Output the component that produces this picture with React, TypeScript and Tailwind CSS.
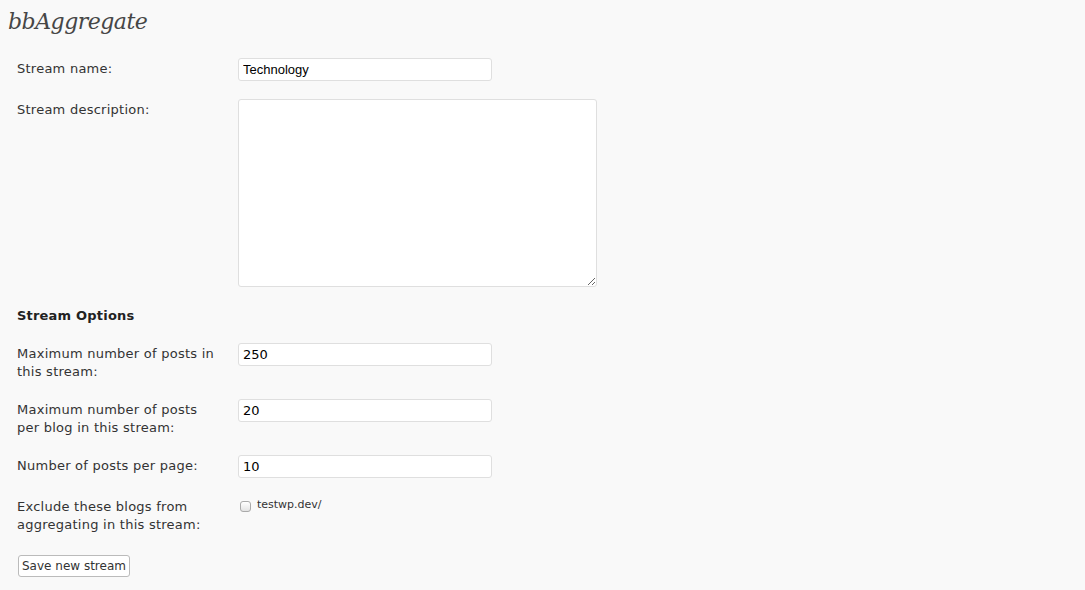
export default function App() {
  const label = "w-[221px] shrink-0 pt-[2px] text-[13px] leading-[18px] tracking-[0.25px] text-[#333]";
  const input =
    "h-[23px] w-[254px] rounded-[3px] border border-[#dfdfdf] bg-white px-[4px] text-[13px] text-[#000] outline-none";
  return (
    <div
      className="min-h-[590px] w-full bg-[#f9f9f9] pl-[17px] pb-[10px]"
      style={{ fontFamily: '"DejaVu Sans", sans-serif' }}
    >
      <h2
        className="-ml-[9px] pt-[7px] text-[22px] italic leading-[30px] tracking-[-0.5px] text-[#464646]"
        style={{ fontFamily: '"DejaVu Serif", serif' }}
      >
        bbAggregate
      </h2>

      <div className="mt-[21px] flex">
        <div className={label}>Stream name:</div>
        <input
          className={input}
          defaultValue="Technology"
          style={{ fontFamily: '"Liberation Sans", Arial, sans-serif' }}
        />
      </div>

      <div className="mt-[18px] flex">
        <div className={label}>Stream description:</div>
        <textarea className="h-[188px] w-[359px] resize rounded-[3px] border border-[#dfdfdf] bg-white p-[4px] text-[13px] outline-none" />
      </div>

      <div className="mt-[20px] text-[13px] font-bold leading-[18px] tracking-[0.2px] text-[#222]">
        Stream Options
      </div>

      <div className="mt-[18px] flex">
        <div className={label}>
          Maximum number of posts in
          <br />
          this stream:
        </div>
        <input className={input} defaultValue="250" />
      </div>

      <div className="mt-[18px] flex">
        <div className={label}>
          Maximum number of posts
          <br />
          per blog in this stream:
        </div>
        <input className={input} defaultValue="20" />
      </div>

      <div className="mt-[18px] flex">
        <div className={label}>Number of posts per page:</div>
        <input className={input} defaultValue="10" />
      </div>

      <div className="mt-[20px] flex">
        <div className="w-[221px] shrink-0 text-[13px] leading-[18px] tracking-[0.25px] text-[#333]">
          Exclude these blogs from
          <br />
          aggregating in this stream:
        </div>
        <label className="flex items-start gap-[6px] pt-[3px] text-[11px] leading-[13px] text-[#333]">
          <span className="ml-[2px] h-[11px] w-[11px] rounded-[3px] border border-[#aaa] bg-gradient-to-b from-white to-[#e3e3e3]" />
          <span className="-mt-[3px]">testwp.dev/</span>
        </label>
      </div>

      <button className="ml-[1px] mt-[21px] h-[22px] rounded-[3px] border border-[#bbb] bg-white px-[3px] text-[12px] leading-[18px] text-[#333]">
        Save new stream
      </button>
    </div>
  );
}
